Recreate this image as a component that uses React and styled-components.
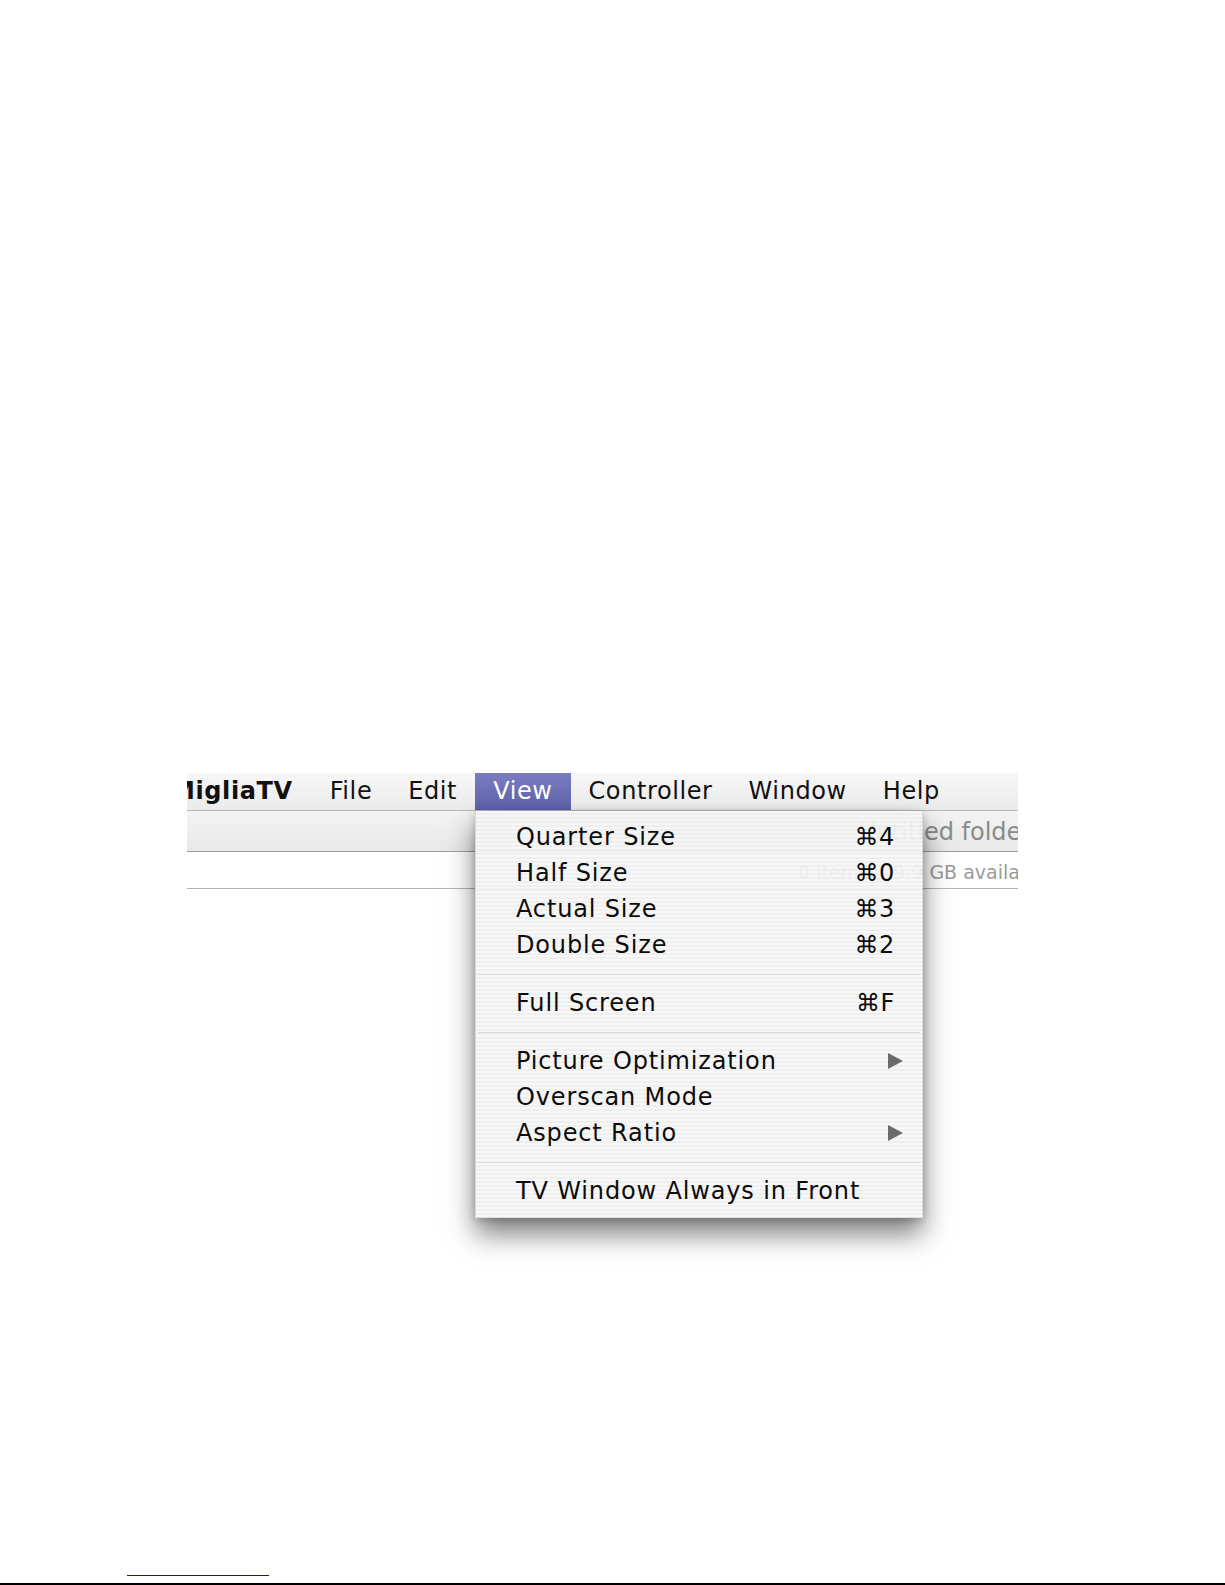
import React from "react";
import styled, { createGlobalStyle, css } from "styled-components";

const GlobalStyle = createGlobalStyle`
  html, body {
    margin: 0;
    padding: 0;
    background: #ffffff;
  }
  body {
    font-family: "DejaVu Sans", "Liberation Sans", sans-serif;
  }
`;

const Page = styled.div`
  height: 1585px;
  box-sizing: border-box;
  display: flex;
  flex-direction: column;
  padding-top: 773px;
`;

const Frame = styled.div`
  position: relative;
  margin-left: 187px;
  width: 831px;
`;

const Clip = styled.div`
  overflow: hidden;
`;

const MenuBar = styled.div`
  display: flex;
  height: 37px;
  background: linear-gradient(#f7f7f7, #ebebeb);
  border-bottom: 1px solid #b8b8b8;
  white-space: nowrap;
`;

const MenuTitle = styled.div`
  flex: none;
  padding: 0 18px;
  font-size: 24px;
  letter-spacing: 0.6px;
  line-height: 37px;
  color: #111;
  font-weight: ${(p) => (p.$app ? "bold" : "normal")};
  ${(p) =>
    p.$app &&
    css`
      margin-left: -34px;
      padding-right: 19px;
    `}
  ${(p) =>
    p.$open &&
    css`
      color: #fff;
      background: linear-gradient(#7a7dc0, #5d61ab);
    `}
`;

const Toolbar = styled.div`
  height: 40px;
  overflow: hidden;
  background: linear-gradient(#f3f3f3, #e9e9e9);
  border-bottom: 1px solid #9e9e9e;
  white-space: nowrap;
  padding-left: 672px;
  font-size: 24px;
  line-height: 43px;
  color: #8a8a8a;
`;

const StatusBar = styled.div`
  height: 37px;
  box-sizing: border-box;
  padding-top: 11px;
  padding-left: 611px;
  background: #fff;
  border-bottom: 1px solid #b4b4b4;
  white-space: nowrap;
  font-size: 19px;
  line-height: 18px;
  color: #9a9a9a;
`;

const Menu = styled.div`
  position: absolute;
  left: 288px;
  top: 38px;
  width: 448px;
  box-sizing: border-box;
  padding: 8px 0;
  background: repeating-linear-gradient(
    to bottom,
    rgba(247, 247, 247, 0.93) 0 2px,
    rgba(238, 238, 238, 0.93) 2px 4px
  );
  border: 1px solid rgba(0, 0, 0, 0.1);
  border-top: none;
  box-shadow: 0 16px 26px rgba(0, 0, 0, 0.5), 0 2px 8px rgba(0, 0, 0, 0.2);
`;

const Item = styled.div`
  display: flex;
  align-items: center;
  height: 36px;
  padding: 0 19px 0 40px;
  font-size: 24px;
  letter-spacing: 0.85px;
  color: #0c0c0c;
  white-space: nowrap;
`;

const Label = styled.span`
  flex: 1;
`;

const Shortcut = styled.span`
  margin-right: 8px;
  letter-spacing: 0.6px;
`;

const Arrow = styled.span`
  width: 0;
  height: 0;
  border-top: 8.5px solid transparent;
  border-bottom: 8.5px solid transparent;
  border-left: 15px solid #6b6b6b;
`;

const Separator = styled.div`
  height: 22px;
  display: flex;
  align-items: center;
  padding: 0 2px;

  &::after {
    content: "";
    flex: 1;
    height: 1px;
    background: #dadada;
  }
`;

const Footer = styled.div`
  margin-top: auto;
  display: flex;
  flex-direction: column;
`;

const FootnoteRule = styled.div`
  margin-left: 127px;
  width: 142px;
  height: 1px;
  background: #1010c8;
`;

const PageEdge = styled.div`
  margin-top: 7px;
  height: 2px;
  background: #000;
`;

const titles = ["File", "Edit", "View", "Controller", "Window", "Help"];

const menu = [
  { label: "Quarter Size", key: "⌘4" },
  { label: "Half Size", key: "⌘0" },
  { label: "Actual Size", key: "⌘3" },
  { label: "Double Size", key: "⌘2" },
  null,
  { label: "Full Screen", key: "⌘F" },
  null,
  { label: "Picture Optimization", sub: true },
  { label: "Overscan Mode" },
  { label: "Aspect Ratio", sub: true },
  null,
  { label: "TV Window Always in Front" },
];

export default function App() {
  return (
    <Page>
      <GlobalStyle />
      <Frame>
        <Clip>
          <MenuBar>
            <MenuTitle $app>MigliaTV</MenuTitle>
            {titles.map((t) => (
              <MenuTitle key={t} $open={t === "View"}>
                {t}
              </MenuTitle>
            ))}
          </MenuBar>
          <Toolbar>Untitled folder</Toolbar>
          <StatusBar>0 items, 29.9 GB available</StatusBar>
        </Clip>
        <Menu>
          {menu.map((m, i) =>
            m ? (
              <Item key={i}>
                <Label>{m.label}</Label>
                {m.key && <Shortcut>{m.key}</Shortcut>}
                {m.sub && <Arrow />}
              </Item>
            ) : (
              <Separator key={i} />
            )
          )}
        </Menu>
      </Frame>
      <Footer>
        <FootnoteRule />
        <PageEdge />
      </Footer>
    </Page>
  );
}
